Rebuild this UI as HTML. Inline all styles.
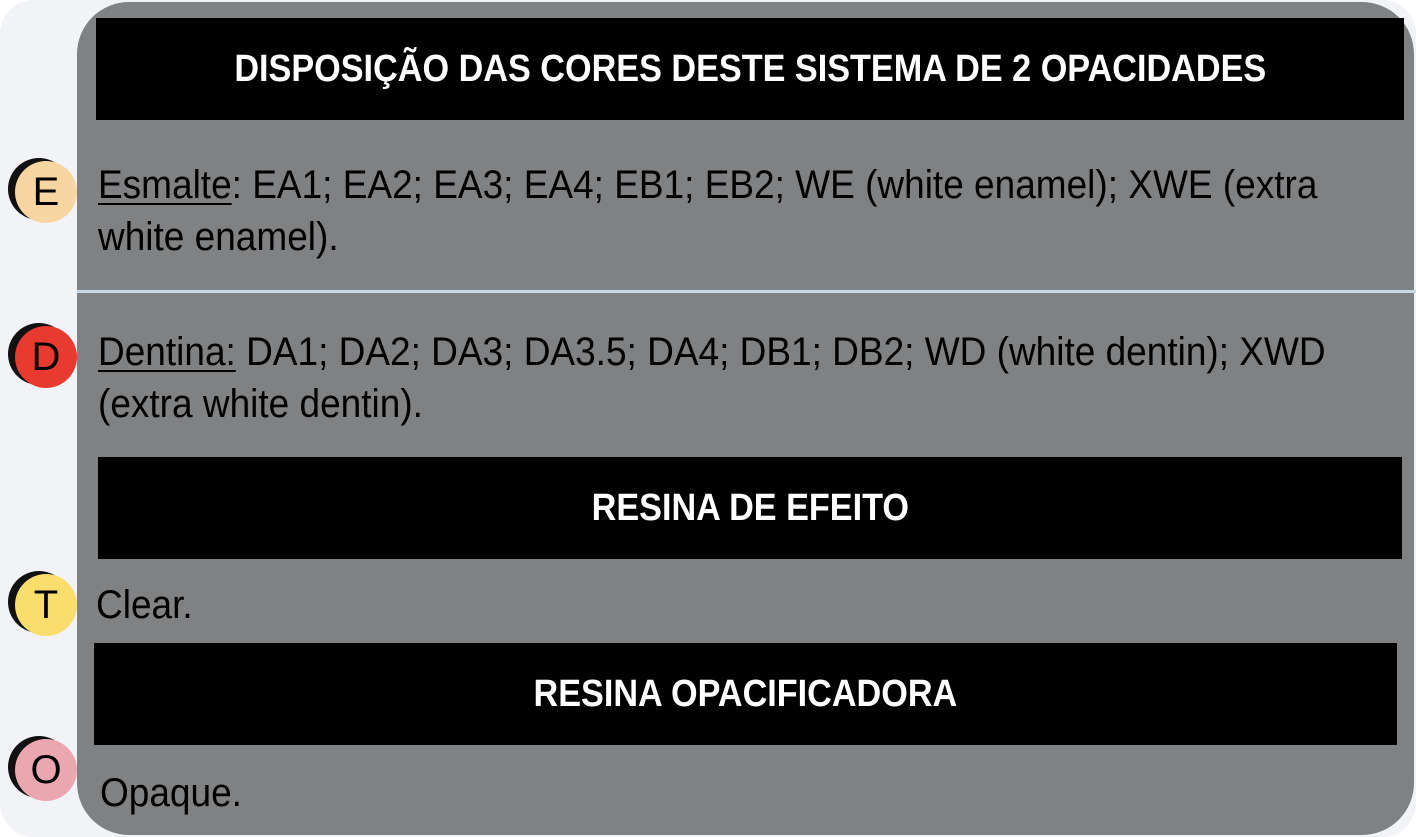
<!DOCTYPE html>
<html><head><meta charset="utf-8"><style>
body{margin:0;width:1416px;height:837px;background:#fff;position:relative;overflow:hidden;font-family:"Liberation Sans",sans-serif}
.outer{position:absolute;left:0;top:0;width:1416px;height:837px;background:#f2f3f6;border-radius:34px}
.panel{position:absolute;left:77px;top:2px;width:1337px;height:833px;background:#808183;border-radius:52px}
.bar{position:absolute;background:#000;color:#fff;font-weight:bold;font-size:38px;display:flex;align-items:center;justify-content:center}
.bar span{display:inline-block;transform:scaleX(0.9)}
.sep{position:absolute;left:77px;top:290px;width:1339px;height:3px;background:#c6d7e5}
.t{position:absolute;font-size:40px;color:#000;line-height:52px;white-space:nowrap;transform-origin:0 0;transform:scaleX(0.925)}
.t u{text-decoration-thickness:2px;text-underline-offset:5px}
.s{position:absolute;width:62px;height:62px;border-radius:50%;background:#111}
.c{position:absolute;width:62px;height:62px;border-radius:50%;display:flex;align-items:center;justify-content:center;font-size:40px;color:#000}
</style></head><body>
<div class="outer"></div>
<div class="panel"></div>
<div class="bar" style="left:96px;top:18px;width:1308px;height:102px"><span>DISPOSIÇÃO DAS CORES DESTE SISTEMA DE 2 OPACIDADES</span></div>
<div class="sep"></div>
<div class="bar" style="left:98px;top:457px;width:1304px;height:102px"><span>RESINA DE EFEITO</span></div>
<div class="bar" style="left:94px;top:643px;width:1303px;height:102px"><span>RESINA OPACIFICADORA</span></div>

<div class="s" style="left:8px;top:158px"></div><div class="c" style="left:15px;top:161px;background:#f8d6a2">E</div>
<div class="s" style="left:8px;top:323px"></div><div class="c" style="left:15px;top:326px;background:#e83a2f">D</div>
<div class="s" style="left:8px;top:571px"></div><div class="c" style="left:15px;top:574px;background:#f9de6e">T</div>
<div class="s" style="left:8px;top:736px"></div><div class="c" style="left:15px;top:739px;background:#eba7af">O</div>

<div class="t" style="left:98px;top:159px"><u>Esmalte</u>: EA1; EA2; EA3; EA4; EB1; EB2; WE (white enamel); XWE (extra<br>white enamel).</div>
<div class="t" style="left:98px;top:326px"><u>Dentina:</u> DA1; DA2; DA3; DA3.5; DA4; DB1; DB2; WD (white dentin); XWD<br>(extra white dentin).</div>
<div class="t" style="left:96px;top:579px">Clear.</div>
<div class="t" style="left:100px;top:767px">Opaque.</div>
</body></html>
